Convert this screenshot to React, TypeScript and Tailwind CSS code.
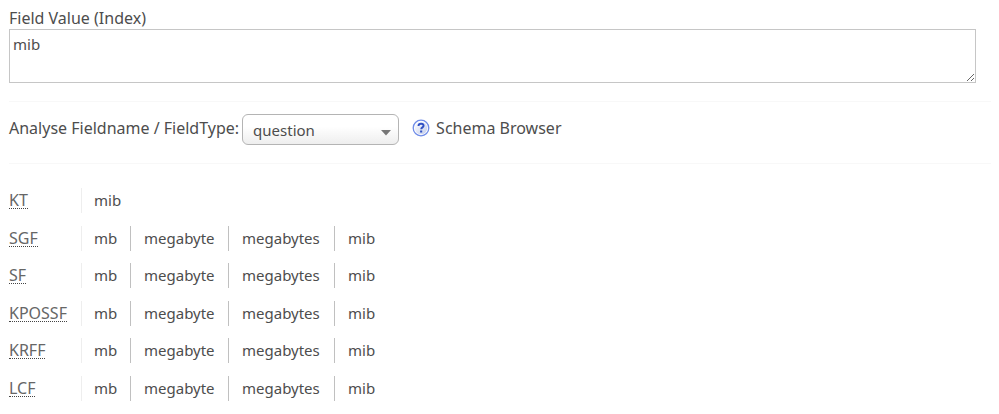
import { useState } from "react";

const synonyms = ["mb", "megabyte", "megabytes", "mib"];

const stages = [
  { name: "KT", tokens: ["mib"] },
  { name: "SGF", tokens: synonyms },
  { name: "SF", tokens: synonyms },
  { name: "KPOSSF", tokens: synonyms },
  { name: "KRFF", tokens: synonyms },
  { name: "LCF", tokens: synonyms },
];

const columnWidths = ["w-[49px]", "w-[98px]", "w-[106px]", "w-auto"];

function HelpIcon() {
  return (
    <svg width="18" height="18" viewBox="0 0 18 18" aria-hidden="true">
      <defs>
        <linearGradient id="help-fill" x1="0" y1="0" x2="1" y2="1">
          <stop offset="0" stopColor="#ffffff" />
          <stop offset="1" stopColor="#c3cdea" />
        </linearGradient>
      </defs>
      <circle cx="9" cy="9" r="7.8" fill="#fff" stroke="#6f8ce8" strokeWidth="1.3" />
      <circle cx="9" cy="9" r="6.3" fill="url(#help-fill)" />
      <path
        d="M6.5 7.1C6.5 5.5 7.5 4.8 9.1 4.8C10.7 4.8 11.6 5.6 11.6 6.8C11.6 8.4 9.2 8.4 9.2 10.3"
        fill="none"
        stroke="#2f50c4"
        strokeWidth="1.9"
      />
      <rect x="8.1" y="11.5" width="2.1" height="2" fill="#2f50c4" />
    </svg>
  );
}

export default function App() {
  const [value, setValue] = useState("mib");

  return (
    <main className="bg-white pt-2 pr-2 pl-[9px] font-['Noto_Sans',sans-serif] text-[16px] leading-5 text-[#4d4d4d]">
      <form>
        <div className="border-b border-[#f8f8f8] pr-[15px] pb-[18px]">
          <label htmlFor="index-value" className="block">
            Field Value (Index)
          </label>
          <textarea
            id="index-value"
            value={value}
            onChange={(e) => setValue(e.target.value)}
            className="mt-px block h-[54px] w-full resize-y border border-[#c6c6c6] bg-white px-[3px] py-1 text-[15px] leading-5 outline-none"
          />
        </div>
        <div className="flex items-start border-b border-[#f8f8f8] pt-3 pb-[18px]">
          <label htmlFor="field-type" className="leading-7">
            Analyse Fieldname / FieldType:
          </label>
          <div className="relative ml-[3px]">
            <select
              id="field-type"
              className="block h-[31px] w-[157px] appearance-none rounded-[6px] border border-[#b4b4b4] bg-linear-to-b from-white from-40% to-[#eeeeee] pl-[10px] text-[15px] outline-none"
            >
              <option>question</option>
            </select>
            <svg
              width="10"
              height="6"
              viewBox="0 0 10 6"
              aria-hidden="true"
              className="pointer-events-none absolute top-4 right-2"
            >
              <path d="M0 0H10L5 5.5Z" fill="#777" />
            </svg>
          </div>
          <a href="#schema" className="ml-[13px] flex items-center gap-[6px] leading-7">
            <HelpIcon />
            Schema Browser
          </a>
        </div>
      </form>
      <table className="mt-[18px] h-[225px] w-full table-fixed border-collapse">
        <tbody>
          {stages.map((stage) => (
            <tr key={stage.name}>
              <th scope="row" className="w-[72px] p-0 text-left align-middle font-normal text-[#666]">
                <abbr
                  title={stage.name}
                  className="block h-[17px] w-fit border-b border-dotted border-[#444] leading-4 no-underline"
                >
                  {stage.name}
                </abbr>
              </th>
              {columnWidths.map((width, i) => (
                <td key={i} className={`${width} p-0 align-middle text-[15px]`}>
                  {stage.tokens[i] && (
                    <div
                      className={`h-[25px] border-l leading-[25px] ${i === 0 ? "border-[#eeeeee] pl-3" : "border-[#c0c0c0] pl-[13px]"}`}
                    >
                      {stage.tokens[i]}
                    </div>
                  )}
                </td>
              ))}
            </tr>
          ))}
        </tbody>
      </table>
    </main>
  );
}
